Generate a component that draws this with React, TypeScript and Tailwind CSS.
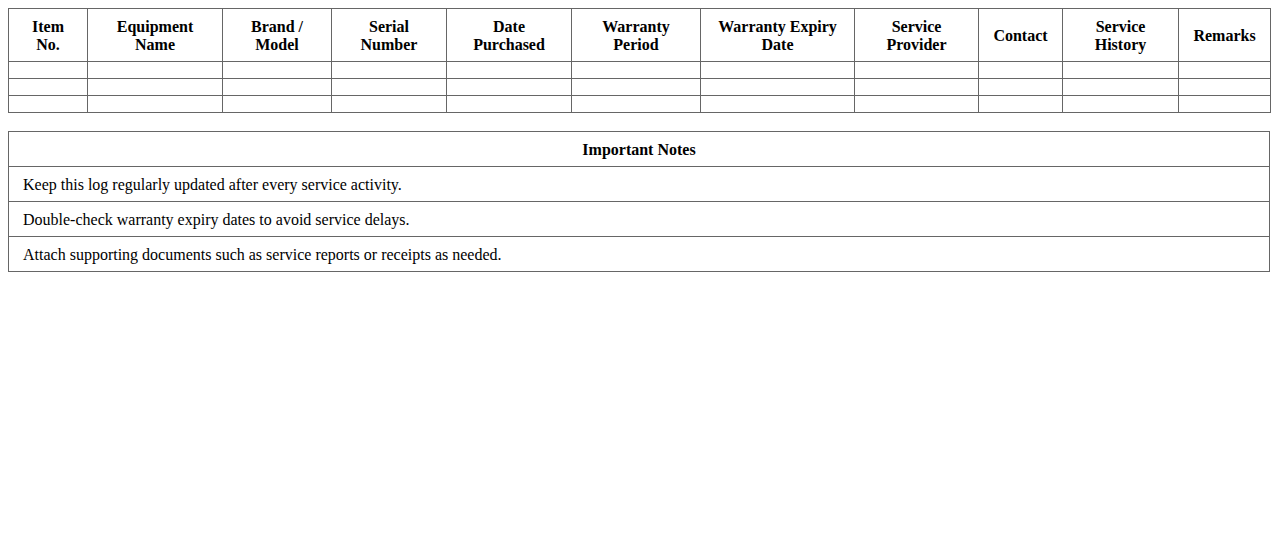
const headers = [
  ["Item", "No."],
  ["Equipment", "Name"],
  ["Brand /", "Model"],
  ["Serial", "Number"],
  ["Date", "Purchased"],
  ["Warranty", "Period"],
  ["Warranty Expiry", "Date"],
  ["Service", "Provider"],
  ["Contact"],
  ["Service", "History"],
  ["Remarks"],
];

const widths = [
  "w-[79px]",
  "w-[135px]",
  "w-[109px]",
  "w-[115px]",
  "w-[125px]",
  "w-[129px]",
  "w-[154px]",
  "w-[124px]",
  "w-[84px]",
  "w-[116px]",
  "w-[92px]",
];

const notes = [
  "Keep this log regularly updated after every service activity.",
  "Double-check warranty expiry dates to avoid service delays.",
  "Attach supporting documents such as service reports or receipts as needed.",
];

export default function App() {
  return (
    <div className="min-h-[550px] bg-white p-2 font-['Liberation_Serif','Times_New_Roman',serif] text-base text-black">
      <table className="w-full table-fixed border-collapse">
        <colgroup>
          {widths.map((w, i) => (
            <col key={i} className={w} />
          ))}
        </colgroup>
        <thead>
          <tr>
            <>
              {headers.map((h, i) => (
                <th key={i} className="border border-[#666] px-2 pt-[9px] pb-[7px] text-center font-bold leading-[18px]">
                  {h.map((line, j) => (
                    <div key={j}>{line}</div>
                  ))}
                </th>
              ))}
            </>
          </tr>
        </thead>
        <tbody>
          {[0, 1, 2].map((r) => (
            <tr key={r}>
              {headers.map((_, i) => (
                <td key={i} className="h-[17px] border border-[#666] p-2"></td>
              ))}
            </tr>
          ))}
        </tbody>
      </table>

      <table className="mt-[18px] w-full border-collapse">
        <thead>
          <tr>
            <th className="h-[35px] border border-[#666] px-[14px] pt-[2px] pb-0 text-center font-bold">Important Notes</th>
          </tr>
        </thead>
        <tbody>
          {notes.map((n) => (
            <tr key={n}>
              <td className="h-[35px] border border-[#666] px-[14px] pt-[2px] pb-0">{n}</td>
            </tr>
          ))}
        </tbody>
      </table>
    </div>
  );
}
